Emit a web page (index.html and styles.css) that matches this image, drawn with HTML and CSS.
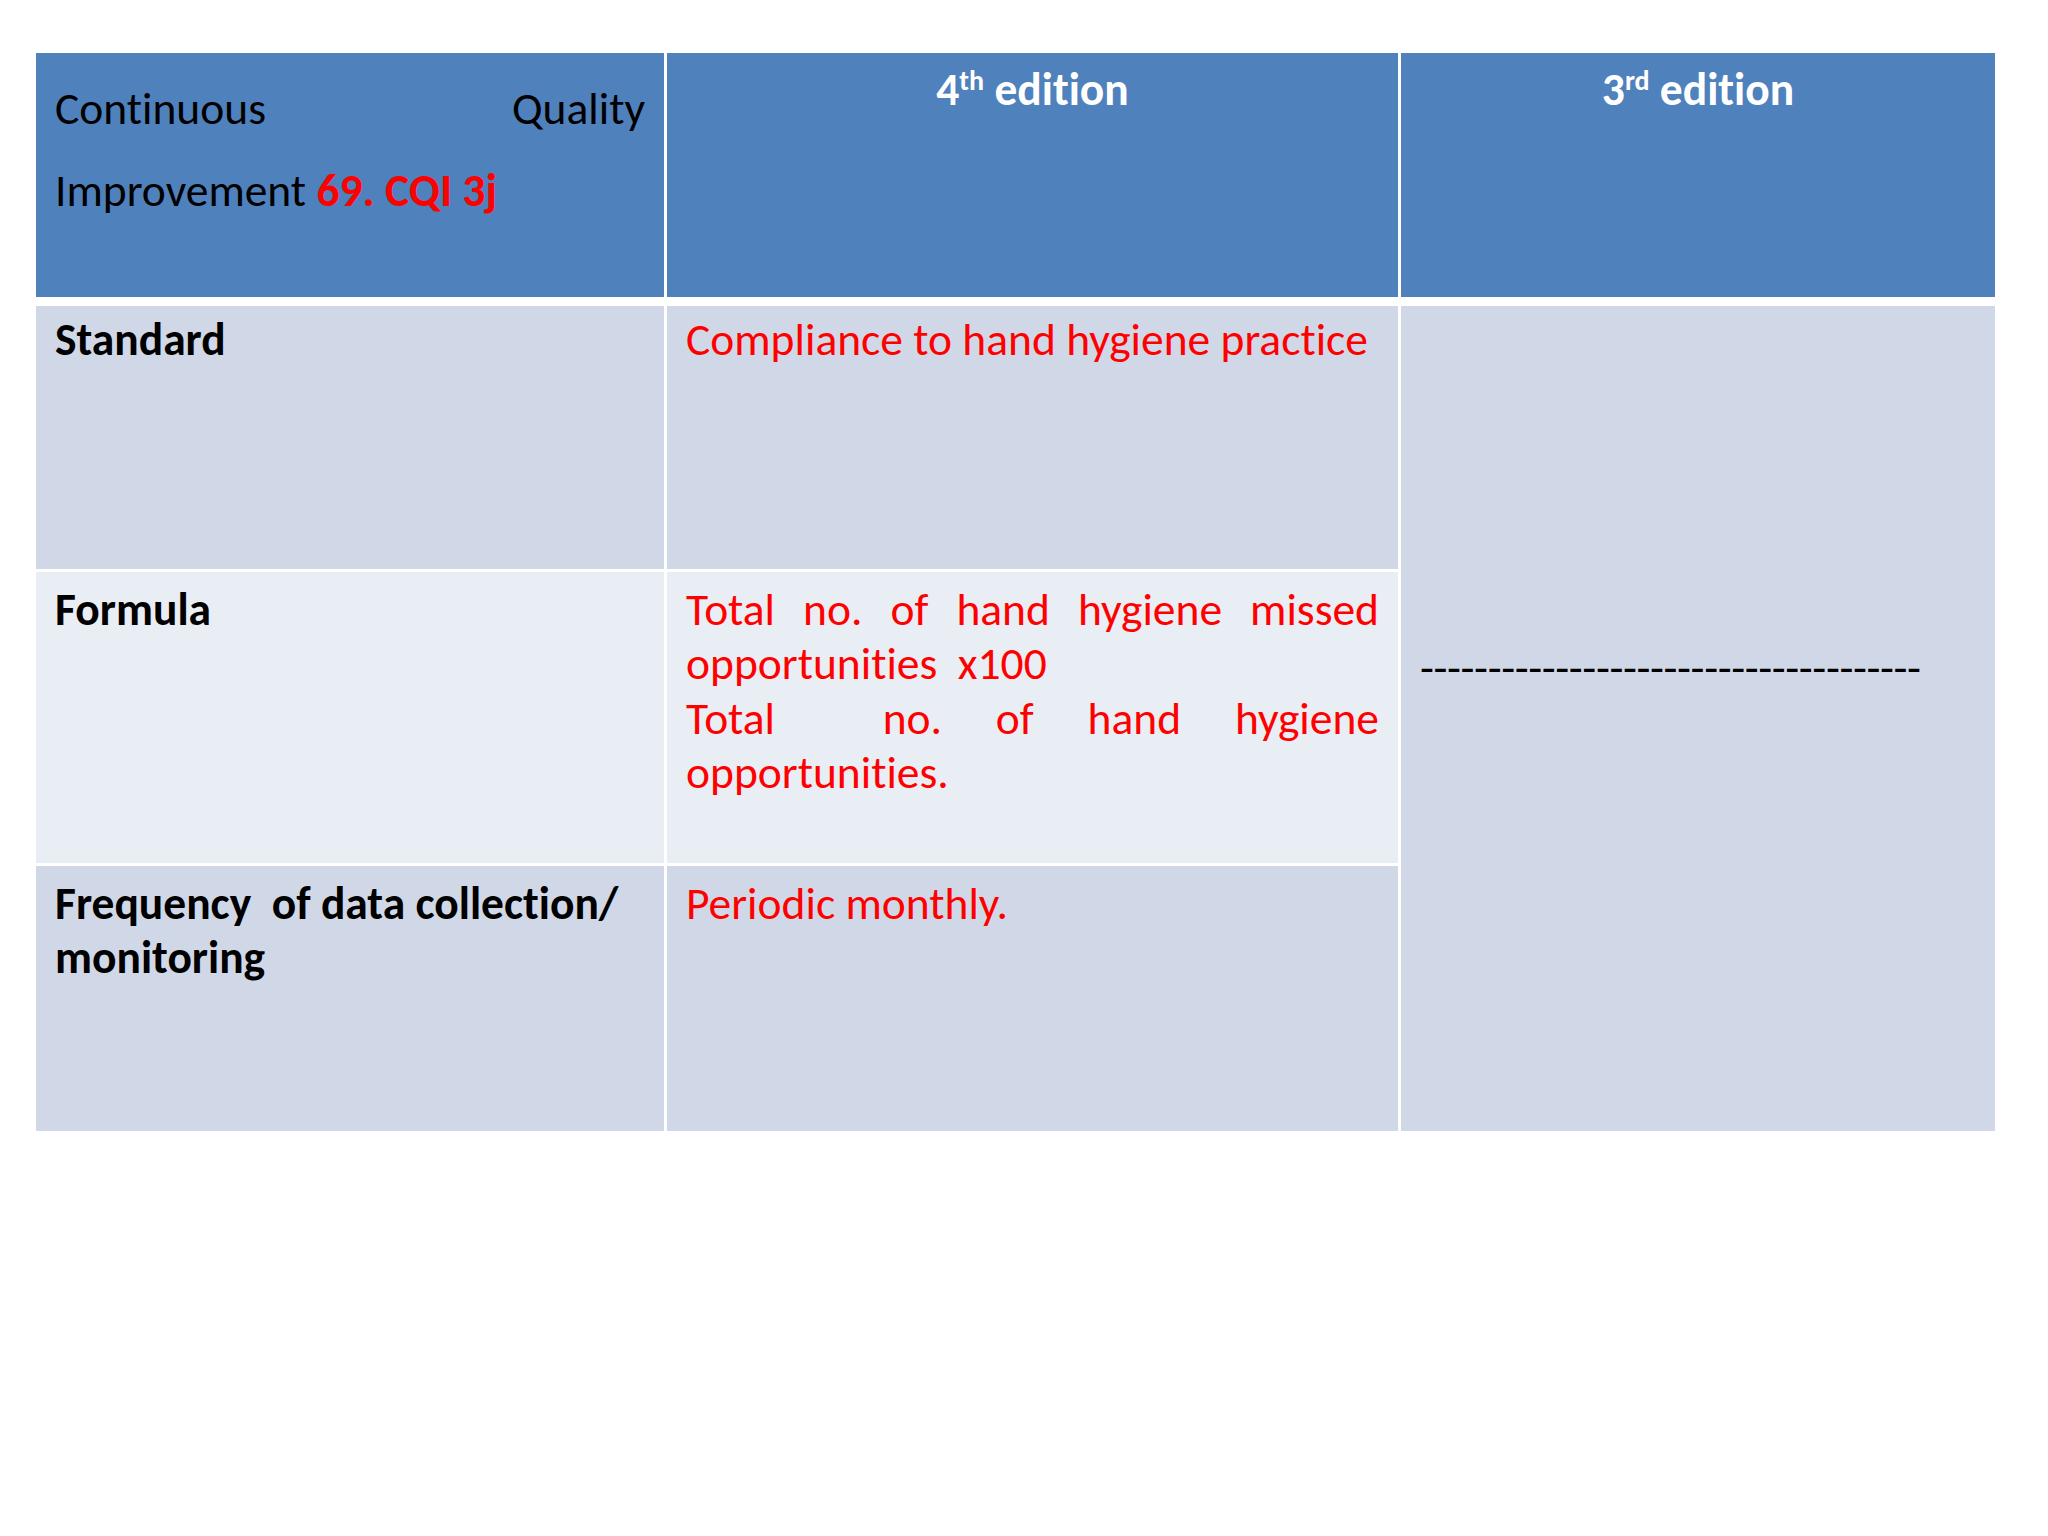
FILE: index.html
```html
<!DOCTYPE html>
<html lang="en">
<head>
<meta charset="utf-8">
<title>CQI 3j</title>
<link rel="stylesheet" href="styles.css">
</head>
<body>
<div class="slide">
  <div class="table">
    <div class="cell head head-first">
      <p class="cqi-line">Continuous Quality</p>
      <p>Improvement <b class="red">69. CQI 3j</b></p>
    </div>
    <div class="cell head head-center"><p>4<sup>th</sup> edition</p></div>
    <div class="cell head head-center"><p>3<sup>rd</sup> edition</p></div>
    <div class="cell band1 row-first"><p class="label">Standard</p></div>
    <div class="cell band1 row-first"><p class="red">Compliance to hand hygiene practice</p></div>
    <div class="cell merged"><p class="dashes">-------------------------------------</p></div>
    <div class="cell band2"><p class="label">Formula</p></div>
    <div class="cell band2"><p class="red just">Total no. of hand hygiene missed opportunities&nbsp; x100</p><p class="red just keep-spaces">Total  no. of hand hygiene opportunities.</p></div>
    <div class="cell band1"><p class="label">Frequency&nbsp; of data collection/ monitoring</p></div>
    <div class="cell band1"><p class="red">Periodic monthly.</p></div>
  </div>
</div>
</body>
</html>
```
FILE: styles.css
```css
html, body {
  margin: 0;
  padding: 0;
  background: #ffffff;
}

.slide {
  width: 2048px;
  height: 1536px;
  box-sizing: border-box;
  padding: 53px 0 0 36px;
  font-family: "Carlito", "Lato", "Liberation Sans", sans-serif;
  font-size: 45.5px;
  font-variant-ligatures: none;
  color: #000000;
}

.table {
  display: grid;
  grid-template-columns: 628px 731px 594px;
  grid-template-rows: 250px 263px 291px 265px;
  column-gap: 3px;
  row-gap: 3px;
  width: 1959px;
}

.cell {
  box-sizing: border-box;
  padding: 10.5px 19px 0 19px;
  line-height: 54.6px;
}

.cell p {
  margin: 0;
}

.head {
  background: #4f81bd;
  margin-bottom: 6px;
  color: #ffffff;
  font-weight: bold;
  padding-top: 10px;
}

.head-first {
  color: #000000;
  font-weight: normal;
  line-height: 82px;
  padding-top: 14.5px;
}

.head-center {
  text-align: center;
}

.cqi-line {
  text-align: justify;
  text-align-last: justify;
}

sup {
  font-size: 28px;
  line-height: 0;
  vertical-align: 15px;
}

.band1 {
  background: #d0d8e8;
}

.band2 {
  background: #e9edf4;
}

.row-first {
  padding-top: 6.5px;
}

.merged {
  grid-column: 3;
  grid-row: 2 / span 3;
  background: #d0d8e8;
  padding-top: 335px;
}

.label {
  font-weight: bold;
}

.red {
  color: #ff0000;
}

.just {
  text-align: justify;
}

.keep-spaces {
  white-space: pre-wrap;
}

.dashes {
  white-space: nowrap;
  letter-spacing: -0.4px;
}
```
